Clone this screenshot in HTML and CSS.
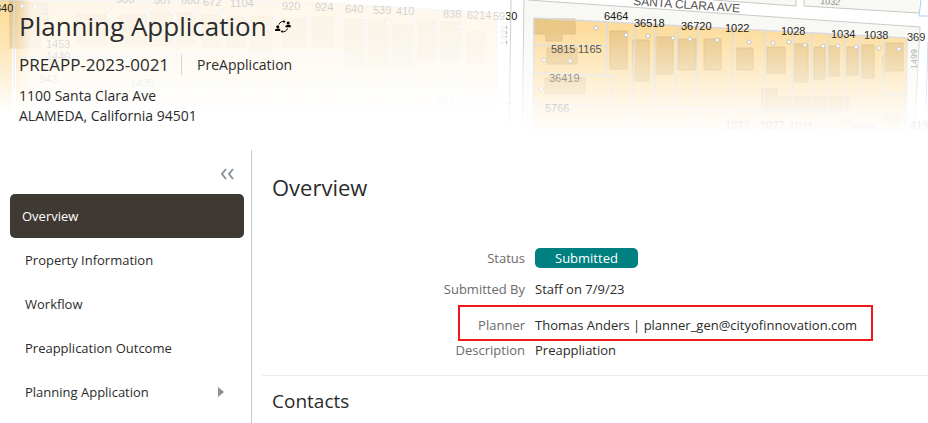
FILE: index.html
```html
<!DOCTYPE html>
<html lang="en">
<head>
    <meta charset="UTF-8">
    <meta name="viewport" content="width=device-width, initial-scale=1.0">
    <title>Planning Application</title>
    <link rel="stylesheet" href="styles.css">
</head>
<body>

<header class="page-header">
    <svg class="map" viewBox="0 0 928 140" preserveAspectRatio="xMinYMin slice" aria-hidden="true">
        <defs>
            <linearGradient id="fade" x1="0" y1="0" x2="0" y2="1">
                <stop offset="0" stop-color="#fff" stop-opacity="0"/>
                <stop offset="0.2" stop-color="#fff" stop-opacity="0.04"/>
                <stop offset="0.4" stop-color="#fff" stop-opacity="0.32"/>
                <stop offset="0.6" stop-color="#fff" stop-opacity="0.6"/>
                <stop offset="0.8" stop-color="#fff" stop-opacity="0.85"/>
                <stop offset="0.96" stop-color="#fff" stop-opacity="1"/>
            </linearGradient>
            <linearGradient id="fade-left" x1="0" y1="0" x2="0" y2="1">
                <stop offset="0" stop-color="#fff" stop-opacity="0"/>
                <stop offset="0.3" stop-color="#fff" stop-opacity="0.25"/>
                <stop offset="0.8" stop-color="#fff" stop-opacity="1"/>
            </linearGradient>
            <linearGradient id="wash">
                <stop offset="0" stop-color="#fff" stop-opacity="0"/>
                <stop offset="0.04" stop-color="#fff" stop-opacity="0.78"/>
                <stop offset="1" stop-color="#fff" stop-opacity="0.8"/>
            </linearGradient>
        </defs>

        <!-- west block -->
        <path class="lot" d="M0 0H12V140H0zM16 0H300L497 13V140H16z"/>
        <path class="building" d="M10 0h31v48H10zM76 14h30v30H76zM120 14h26v30h-26zM151 12h21v34h-21zM177 13h18v31h-18zM202 15h18v32h-18zM227 16h17v32h-17zM251 17h21v33h-21zM283 19h23v29h-23zM313 17h20v31h-20zM345 20h19v46h-19zM369 20h19v46h-19zM392 25h22v40h-22zM418 20h18v40h-18zM441 22h19v39h-19zM467 31h17v33h-17z"/>
        <path class="lot-line" d="M0 0L300 3L497 13V102M14 0V90M112 3V95M148 3V95M174 3V95M199 3V95M223 3V95M248 3V95M277 4V98M312 5V98M343 6L341 98M368 7L365 98M391 8L389 98M414 9L412 98M437 10V98M462 11L460 98M57 55H350"/>
        <path class="water-line" d="M20 57H130V84H300L512 103"/>
        <g class="address-point">
            <circle cx="22" cy="6" r="2"/><circle cx="35" cy="7" r="2"/><circle cx="108" cy="9" r="2"/>
            <circle cx="146" cy="12" r="2"/><circle cx="173" cy="12" r="2"/><circle cx="195" cy="14" r="2"/>
            <circle cx="221" cy="14" r="2"/><circle cx="245" cy="16" r="2"/><circle cx="275" cy="18" r="2"/>
            <circle cx="307" cy="19" r="2"/><circle cx="337" cy="21" r="2"/><circle cx="365" cy="22" r="2"/>
            <circle cx="388" cy="23" r="2"/><circle cx="408" cy="24" r="2"/><circle cx="435" cy="26" r="2"/>
            <circle cx="459" cy="27" r="2"/><circle cx="485" cy="28" r="2"/>
        </g>
        <g class="map-label">
            <text x="-5" y="12">340</text>
            <text x="116" y="3">908</text><text x="154" y="4">507</text><text x="181" y="4">680</text>
            <text x="203" y="6">672</text><text x="230" y="7">1104</text><text x="282" y="10">920</text>
            <text x="315" y="11">924</text><text x="345" y="13">640</text><text x="373" y="14">539</text>
            <text x="396" y="15">410</text><text x="443" y="18">838</text><text x="467" y="19">6214</text>
            <text x="493" y="20">5930</text><text x="46" y="48">1453</text><text x="46" y="60">1440</text>
            <text x="39" y="83">843</text><text x="130" y="87">1436</text><text x="436" y="105">501</text>
        </g>
        <g class="street-label">
            <text transform="translate(507 45) rotate(-90)">1499</text>
            <text transform="translate(48 22) rotate(-90)">1499</text>
        </g>
        <rect x="12" width="494" height="140" fill="url(#wash)"/>
        <rect width="506" height="140" fill="url(#fade-left)"/>

        <!-- east block -->
        <path class="block" d="M525 0L920 27L914 140H522zM713 0L796 6V0zM804 0V6L919 13V0z"/>
        <path class="street" d="M580 0L928 22V10L713 0z"/>
        <path class="block" d="M713 0L796 6V0zM804 0V6L919 13V0z"/>
        <path class="lot" d="M534 18L907 38L906 140H533z"/>
        <path class="building" d="M534 19h41v15h-13v7h-16v-7h-12zM547 48h30v16h-30zM545 78h40v16h-40zM610 31h17v38h-17zM633 40h16v41h-16zM655 37h18v37h-18zM678 39h18v31h-18zM704 39h17v31h-17zM737 48h16v22h-16zM767 47h18v26h-18zM794 44h14v38h-14zM814 47h11v32h-11zM829 46h10v30h-10zM847 47h11v28h-11zM862 45h12v33h-12zM886 43h17v28h-20v-15h3zM762 89h15v8h71v15h-86zM840 120h14v20h-14zM883 115h17v25h-17z"/>
        <path class="lot-line" d="M534 18L907 38L906 140M534 18L533 140M534 45L606 46M534 73L612 76V106M607 22L606 75M635 23L632 140M656 24L654 106M678 26L675 107M698 27L696 140M733 29L730 140M765 31L763 140M794 32L792 140M812 33L811 112M828 34L827 140M845 35L844 112M860 36L859 140M885 37L883 94L907 95M533 104L907 114"/>
        <path class="road-line" d="M511 0L509 140M524 0L522 140M528 0L920 27L914 140M713 0L796 6V0M804 0V6L919 13"/>
        <path class="water-line" d="M921 0L919 16H928M928 42L926 110H928"/>
        <g class="address-point">
            <circle cx="596" cy="28" r="2"/><circle cx="544" cy="60" r="2"/><circle cx="570" cy="61" r="2"/>
            <circle cx="541" cy="89" r="2"/><circle cx="626" cy="35" r="2"/><circle cx="648" cy="36" r="2"/>
            <circle cx="673" cy="38" r="2"/><circle cx="690" cy="39" r="2"/><circle cx="717" cy="40" r="2"/>
            <circle cx="749" cy="42" r="2"/><circle cx="773" cy="43" r="2"/><circle cx="789" cy="42" r="2"/>
            <circle cx="805" cy="45" r="2"/><circle cx="823" cy="46" r="2"/><circle cx="838" cy="46" r="2"/>
            <circle cx="856" cy="47" r="2"/><circle cx="879" cy="48" r="2"/><circle cx="899" cy="49" r="2"/>
        </g>
        <g class="map-label">
            <text x="604" y="20">6464</text><text x="634" y="27">36518</text><text x="681" y="30">36720</text>
            <text x="725" y="32">1022</text><text x="781" y="35">1028</text><text x="831" y="38">1034</text>
            <text x="864" y="39">1038</text><text x="907" y="41">369</text><text x="551" y="53">5815</text>
            <text x="578" y="53">1165</text><text x="549" y="82">36419</text><text x="545" y="112">5766</text>
            <text x="910" y="129">419</text><text x="725" y="129">1023</text><text x="760" y="129">1027</text>
            <text x="789" y="130">1031</text><text x="853" y="133">1039</text>
        </g>
        <g class="street-label">
            <text transform="translate(917 69) rotate(-90)">1499</text>
            <text transform="translate(820 4) rotate(4)">1032</text>
            <text class="street-name" transform="translate(633 5) rotate(4)">SANTA CLARA AVE</text>
        </g>
        <rect x="506" width="422" height="140" fill="url(#fade)"/>
    </svg>

    <div class="header-text">
        <div class="title-row">
            <h1>Planning Application</h1>
            <button type="button" class="switch-button" aria-label="Switch contact">
                <svg width="16" height="13" viewBox="0 0 16 13">
                    <path d="M4 4.500A5 5 0 0 1 9.500 1.500M12.500 8.500A5 5 0 0 1 6.500 11.500" fill="none" stroke="#000"/>
                    <path d="M8.500 0L10.500 1.800L8.500 3.200zM7.500 10V13L5.800 11.500z"/>
                    <circle cx="2.800" cy="6.800" r="1.500"/>
                    <path d="M0 11V10Q0 8.700 2.700 8.600T5.400 10V11z"/>
                    <circle cx="13.200" cy="3" r="1.500"/>
                    <path d="M10.500 7.200V6.200Q10.500 4.900 13.200 4.800T15.900 6.200V7.200z"/>
                </svg>
            </button>
        </div>
        <div class="record-row">
            <span class="record-id">PREAPP-2023-0021</span>
            <span class="record-type">PreApplication</span>
        </div>
        <address>1100 Santa Clara Ave<br>ALAMEDA, California 94501</address>
    </div>
</header>

<div class="content">
    <nav class="sidebar">
        <button type="button" class="collapse-button" aria-label="Collapse menu">
            <svg width="14" height="12" viewBox="0 0 14 12">
                <path d="M6 1L2 6L6 11M13 1L9 6L13 11" fill="none" stroke="#8a949c" stroke-width="2"/>
            </svg>
        </button>
        <ul>
            <li><a href="#overview" class="active">Overview</a></li>
            <li><a href="#property">Property Information</a></li>
            <li><a href="#workflow">Workflow</a></li>
            <li><a href="#outcome">Preapplication Outcome</a></li>
            <li><a href="#planning">Planning Application
                <svg width="6" height="10" viewBox="0 0 6 10"><path d="M0 0L6 5L0 10z" fill="#84909a"/></svg></a></li>
        </ul>
    </nav>

    <main>
        <section id="overview" class="overview">
            <h2>Overview</h2>
            <dl>
                <div class="field">
                    <dt>Status</dt>
                    <dd><span class="badge">Submitted</span></dd>
                </div>
                <div class="field">
                    <dt>Submitted By</dt>
                    <dd>Staff on 7/9/23</dd>
                </div>
                <div class="field highlight">
                    <dt>Planner</dt>
                    <dd>Thomas Anders | planner_gen@cityofinnovation.com</dd>
                </div>
                <div class="field">
                    <dt>Description</dt>
                    <dd>Preappliation</dd>
                </div>
            </dl>
        </section>
        <section class="contacts">
            <h3>Contacts</h3>
        </section>
    </main>
</div>

</body>
</html>
```

FILE: styles.css
```css
*,
*::after {
    box-sizing: border-box;
}

body {
    margin: 0;
    font-family: "Segoe UI", "Open Sans", sans-serif;
    font-size: 13px;
    line-height: 20px;
    color: #2b2b2b;
    background-color: #fff;
}

h1, h2, h3, ul, dl, dd {
    margin: 0;
    padding: 0;
    font-weight: 400;
}

button {
    padding: 0;
    border: none;
    background: none;
    cursor: pointer;
}

button svg {
    display: block;
}

/* Header */
.page-header {
    position: relative;
    min-height: 150px;
    overflow: hidden;
    font-size: 14px;
}

.map {
    position: absolute;
    top: 0;
    left: 0;
    width: 100%;
    height: 140px;
}

.header-text {
    position: relative;
    padding: 8px 19px;
}

.title-row,
.record-row {
    display: flex;
    align-items: center;
}

.title-row {
    gap: 8px;
}

h1 {
    font-size: 26px;
    line-height: 36px;
}

.record-row {
    margin: 11px 0;
}

.record-id {
    padding-right: 12px;
    border-right: 1px solid #cdd6df;
    font-size: 17px;
}

.record-type {
    padding-left: 15px;
}

address {
    font-style: normal;
}

.block {
    fill: #f8f8f4;
}

.street {
    fill: #fff;
}

.lot {
    fill: #fddb98;
}

.building {
    fill: #e8c580;
    stroke: #d9b878;
}

.lot-line {
    fill: none;
    stroke: #d8d8dc;
    stroke-width: 1.5;
}

.road-line {
    fill: none;
    stroke: #c8c8c4;
}

.water-line {
    fill: none;
    stroke: #a9ccf8;
}

.address-point {
    fill: #fff;
    stroke: #bbb;
}

.map-label {
    font-family: "Liberation Sans", Arial, sans-serif;
    font-size: 11px;
    fill: #111;
}

.street-label {
    font-family: "Liberation Sans", Arial, sans-serif;
    font-size: 9px;
    fill: #888;
}

.street-name {
    font-size: 12px;
    fill: #555;
}

/* Content */
.content {
    display: flex;
    min-height: 273px;
}

.sidebar {
    flex: 0 0 252px;
    padding: 18px 7px 0 10px;
    border-right: 1px solid #c8c8c8;
}

.collapse-button {
    display: block;
    margin: 0 10px 14px auto;
}

.sidebar ul {
    list-style: none;
}

.sidebar a {
    display: flex;
    align-items: center;
    justify-content: space-between;
    height: 44px;
    padding: 0 20px 0 15px;
    color: #2b2b2b;
    text-decoration: none;
}

.sidebar a.active {
    padding-left: 12px;
    border-radius: 5px;
    color: #fff;
    background-color: #3f3934;
}

main {
    flex: 1;
    padding-left: 10px;
}

.overview {
    padding: 21px 10px 15px;
    border-bottom: 1px solid #ececec;
}

h2 {
    margin-bottom: 45px;
    font-size: 22px;
    line-height: 32px;
}

.field {
    display: flex;
    gap: 10px;
    margin-bottom: 11px;
}

.field:last-child {
    margin-bottom: 0;
}

dt {
    flex: 0 0 253px;
    text-align: right;
    color: #6b6b6b;
}

.badge {
    display: block;
    padding: 0 20px;
    border-radius: 5px;
    color: #fff;
    background-color: #008080;
}

.highlight {
    position: relative;
    margin: 16px 0 5px;
}

.highlight::after {
    content: "";
    position: absolute;
    top: -10px;
    left: 186px;
    width: 415px;
    height: 36px;
    border: 2px solid #f01818;
}

.contacts {
    padding: 11px 10px;
}

h3 {
    font-size: 19px;
    line-height: 28px;
}
```
